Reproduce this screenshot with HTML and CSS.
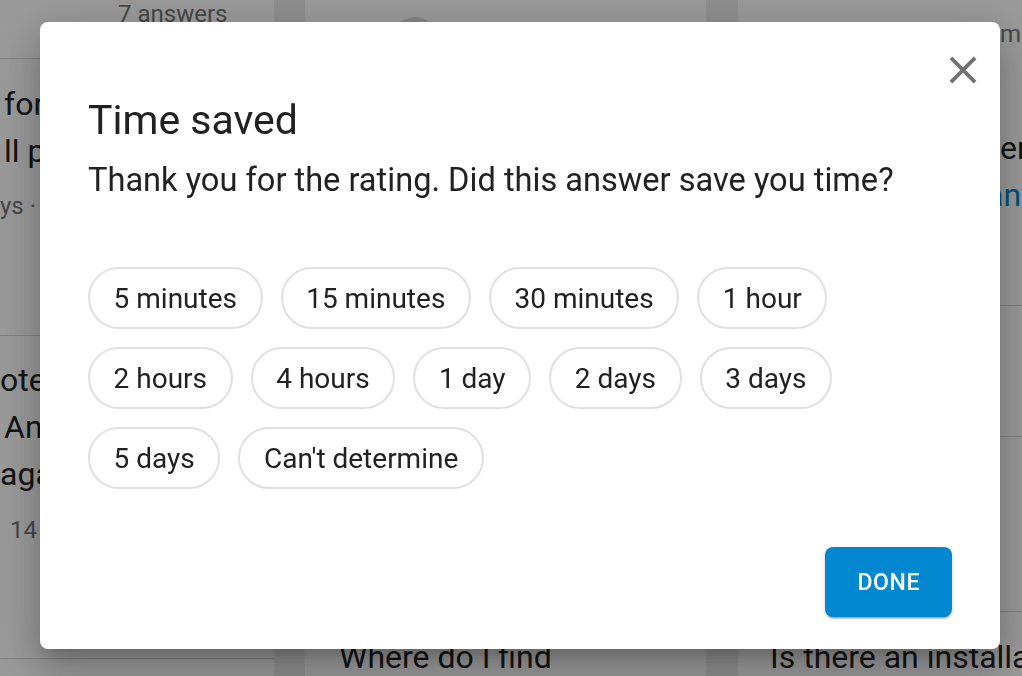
FILE: index.html
```html
<!DOCTYPE html>
<html lang="en">
<head>
<meta charset="utf-8">
<title>Time saved</title>
<link rel="stylesheet" href="styles.css">
</head>
<body>
<div class="page">
  <div class="col col-left">
    <div class="card c-l1"><div class="count">7 answers</div></div>
    <div class="card c-l2">
      <div class="t">for the new release</div>
      <div class="t">ll pages sync</div>
      <div class="m shift">ys · 1 answer</div>
    </div>
    <div class="card c-l3">
      <div class="t shift">oted in the</div>
      <div class="t">Any update</div>
      <div class="t shift">again later</div>
      <div class="m ind">14 answers</div>
    </div>
    <div class="card c-l4"></div>
  </div>
  <div class="col col-mid">
    <div class="card c-m1"><div class="avatar"></div></div>
    <div class="card c-m2"><div class="t">Where do I find</div></div>
  </div>
  <div class="col col-right">
    <div class="card c-r1">
      <div class="m edge">months ago</div>
      <div class="t first">Question title</div>
      <div class="t edge">ent</div>
      <div class="link edge-a">answers</div>
    </div>
    <div class="card c-r2"></div>
    <div class="card c-r3"></div>
    <div class="card c-r4"><div class="t">Is there an installation guide</div></div>
  </div>
</div>

<div class="scrim">
  <div class="dialog" role="dialog" aria-labelledby="dlg-title">
    <div class="dialog-head">
      <button class="close" aria-label="Close">
        <svg viewBox="0 0 24 24" width="46" height="46"><path fill="currentColor" d="M19 6.41L17.59 5 12 10.59 6.41 5 5 6.41 10.59 12 5 17.59 6.41 19 12 13.41 17.59 19 19 17.59 13.41 12z"/></svg>
      </button>
    </div>
    <div class="dialog-body">
      <h2 class="title" id="dlg-title">Time saved</h2>
      <p class="subtitle">Thank you for the rating. Did this answer save you time?</p>
      <div class="chips">
        <span class="chip">5 minutes</span>
        <span class="chip">15 minutes</span>
        <span class="chip">30 minutes</span>
        <span class="chip">1 hour</span>
        <span class="chip">2 hours</span>
        <span class="chip">4 hours</span>
        <span class="chip">1 day</span>
        <span class="chip">2 days</span>
        <span class="chip">3 days</span>
        <span class="chip">5 days</span>
        <span class="chip">Can't determine</span>
      </div>
      <div class="actions">
        <button class="done">DONE</button>
      </div>
    </div>
  </div>
</div>
</body>
</html>
```
FILE: styles.css
```css
* { box-sizing: border-box; }
html, body { margin: 0; padding: 0; overflow: hidden; }
body {
  width: 1022px;
  height: 676px;
  background: #ededed;
  font-family: Roboto, "Noto Sans", "Liberation Sans", sans-serif;
  color: #212121;
}

/* background page */
.page { display: flex; height: 676px; }
.col { display: flex; flex-direction: column; flex: none; }
.col-left { width: 274px; margin-right: 31px; }
.col-mid { width: 401px; margin-right: 32px; }
.col-right { width: 460px; }
.card {
  background: #fff;
  border-bottom: 1px solid #d6d6d6;
  overflow: hidden;
  white-space: nowrap;
  flex: none;
}
.t { font-size: 32px; line-height: 47px; color: #212121; }
.m { font-size: 24px; line-height: 29px; color: #757575; margin-top: 18px; }
.count { font-size: 24px; line-height: 29px; color: #757575; }
.link { font-size: 32px; line-height: 47px; color: #0288d1; }
.shift { margin-left: -4px; }
.ind { padding-left: 6px; }

.c-l1 { height: 59px; padding-left: 118px; }
.c-l2 { height: 277px; padding: 22px 0 0 4px; }
.c-l2 .m { margin-top: 17px; }
.c-l3 { height: 323px; padding: 21px 0 0 4px; }
.c-l4 { flex: 1; border-bottom: 0; }

.c-m1 { height: 612px; padding: 17px 0 0 85px; }
.avatar { width: 50px; height: 50px; border-radius: 50%; background: #dcdcdc; }
.c-m2 { flex: 1; padding: 22px 0 0 34px; border-bottom: 0; }

.c-r1 { height: 306px; padding: 20px 0 0 32px; }
.c-r1 .m { margin-top: 0; }
.c-r1 .first { margin-top: 29px; }
.edge { padding-left: 230px; }
.edge-a { padding-left: 216px; }
.c-r2 { height: 131px; }
.c-r3 { height: 175px; }
.c-r4 { flex: 1; padding: 22px 0 0 32px; border-bottom: 0; }

/* modal */
.scrim {
  position: fixed;
  inset: 0;
  background: rgba(0, 0, 0, 0.4);
}
.dialog {
  width: 960px;
  height: 627px;
  margin: 22px 0 0 40px;
  background: #fff;
  border-radius: 8px;
  box-shadow: 0 11px 15px -7px rgba(0,0,0,.2), 0 24px 38px 3px rgba(0,0,0,.14), 0 9px 46px 8px rgba(0,0,0,.12);
  display: flex;
  flex-direction: column;
  padding: 25px 14px 32px 48px;
}
.dialog-head { display: flex; justify-content: flex-end; height: 46px; flex: none; }
.close {
  width: 46px; height: 46px; padding: 0; border: 0; background: none;
  color: #737373; display: block; cursor: pointer;
}
.close svg { display: block; }
.dialog-body {
  flex: 1;
  display: flex;
  flex-direction: column;
  padding-right: 34px;
}
.title {
  margin: 3px 0 0;
  font-size: 41px;
  line-height: 48px;
  font-weight: 400;
  color: #212121;
}
.subtitle {
  margin: 14px 0 0;
  font-size: 32.6px;
  line-height: 44px;
  color: #212121;
}
.chips {
  margin-top: 65px;
  display: flex;
  flex-wrap: wrap;
  gap: 18px;
}
.chip {
  height: 62px;
  border: 2px solid #e0e0e0;
  border-radius: 31px;
  padding: 0 23.6px;
  font-size: 28px;
  display: flex;
  align-items: center;
  color: #212121;
  white-space: nowrap;
}
.actions {
  margin-top: auto;
  display: flex;
  justify-content: flex-end;
}
.done {
  height: 70px;
  padding: 0 32px;
  border: 0;
  border-radius: 8px;
  background: #0288d1;
  color: #fff;
  font-family: Roboto, "Noto Sans", sans-serif;
  font-size: 23px;
  font-weight: 500;
  letter-spacing: 0.6px;
  box-shadow: 0 3px 1px -2px rgba(0,0,0,.2), 0 2px 2px 0 rgba(0,0,0,.14), 0 1px 5px 0 rgba(0,0,0,.12);
  cursor: pointer;
}
```
